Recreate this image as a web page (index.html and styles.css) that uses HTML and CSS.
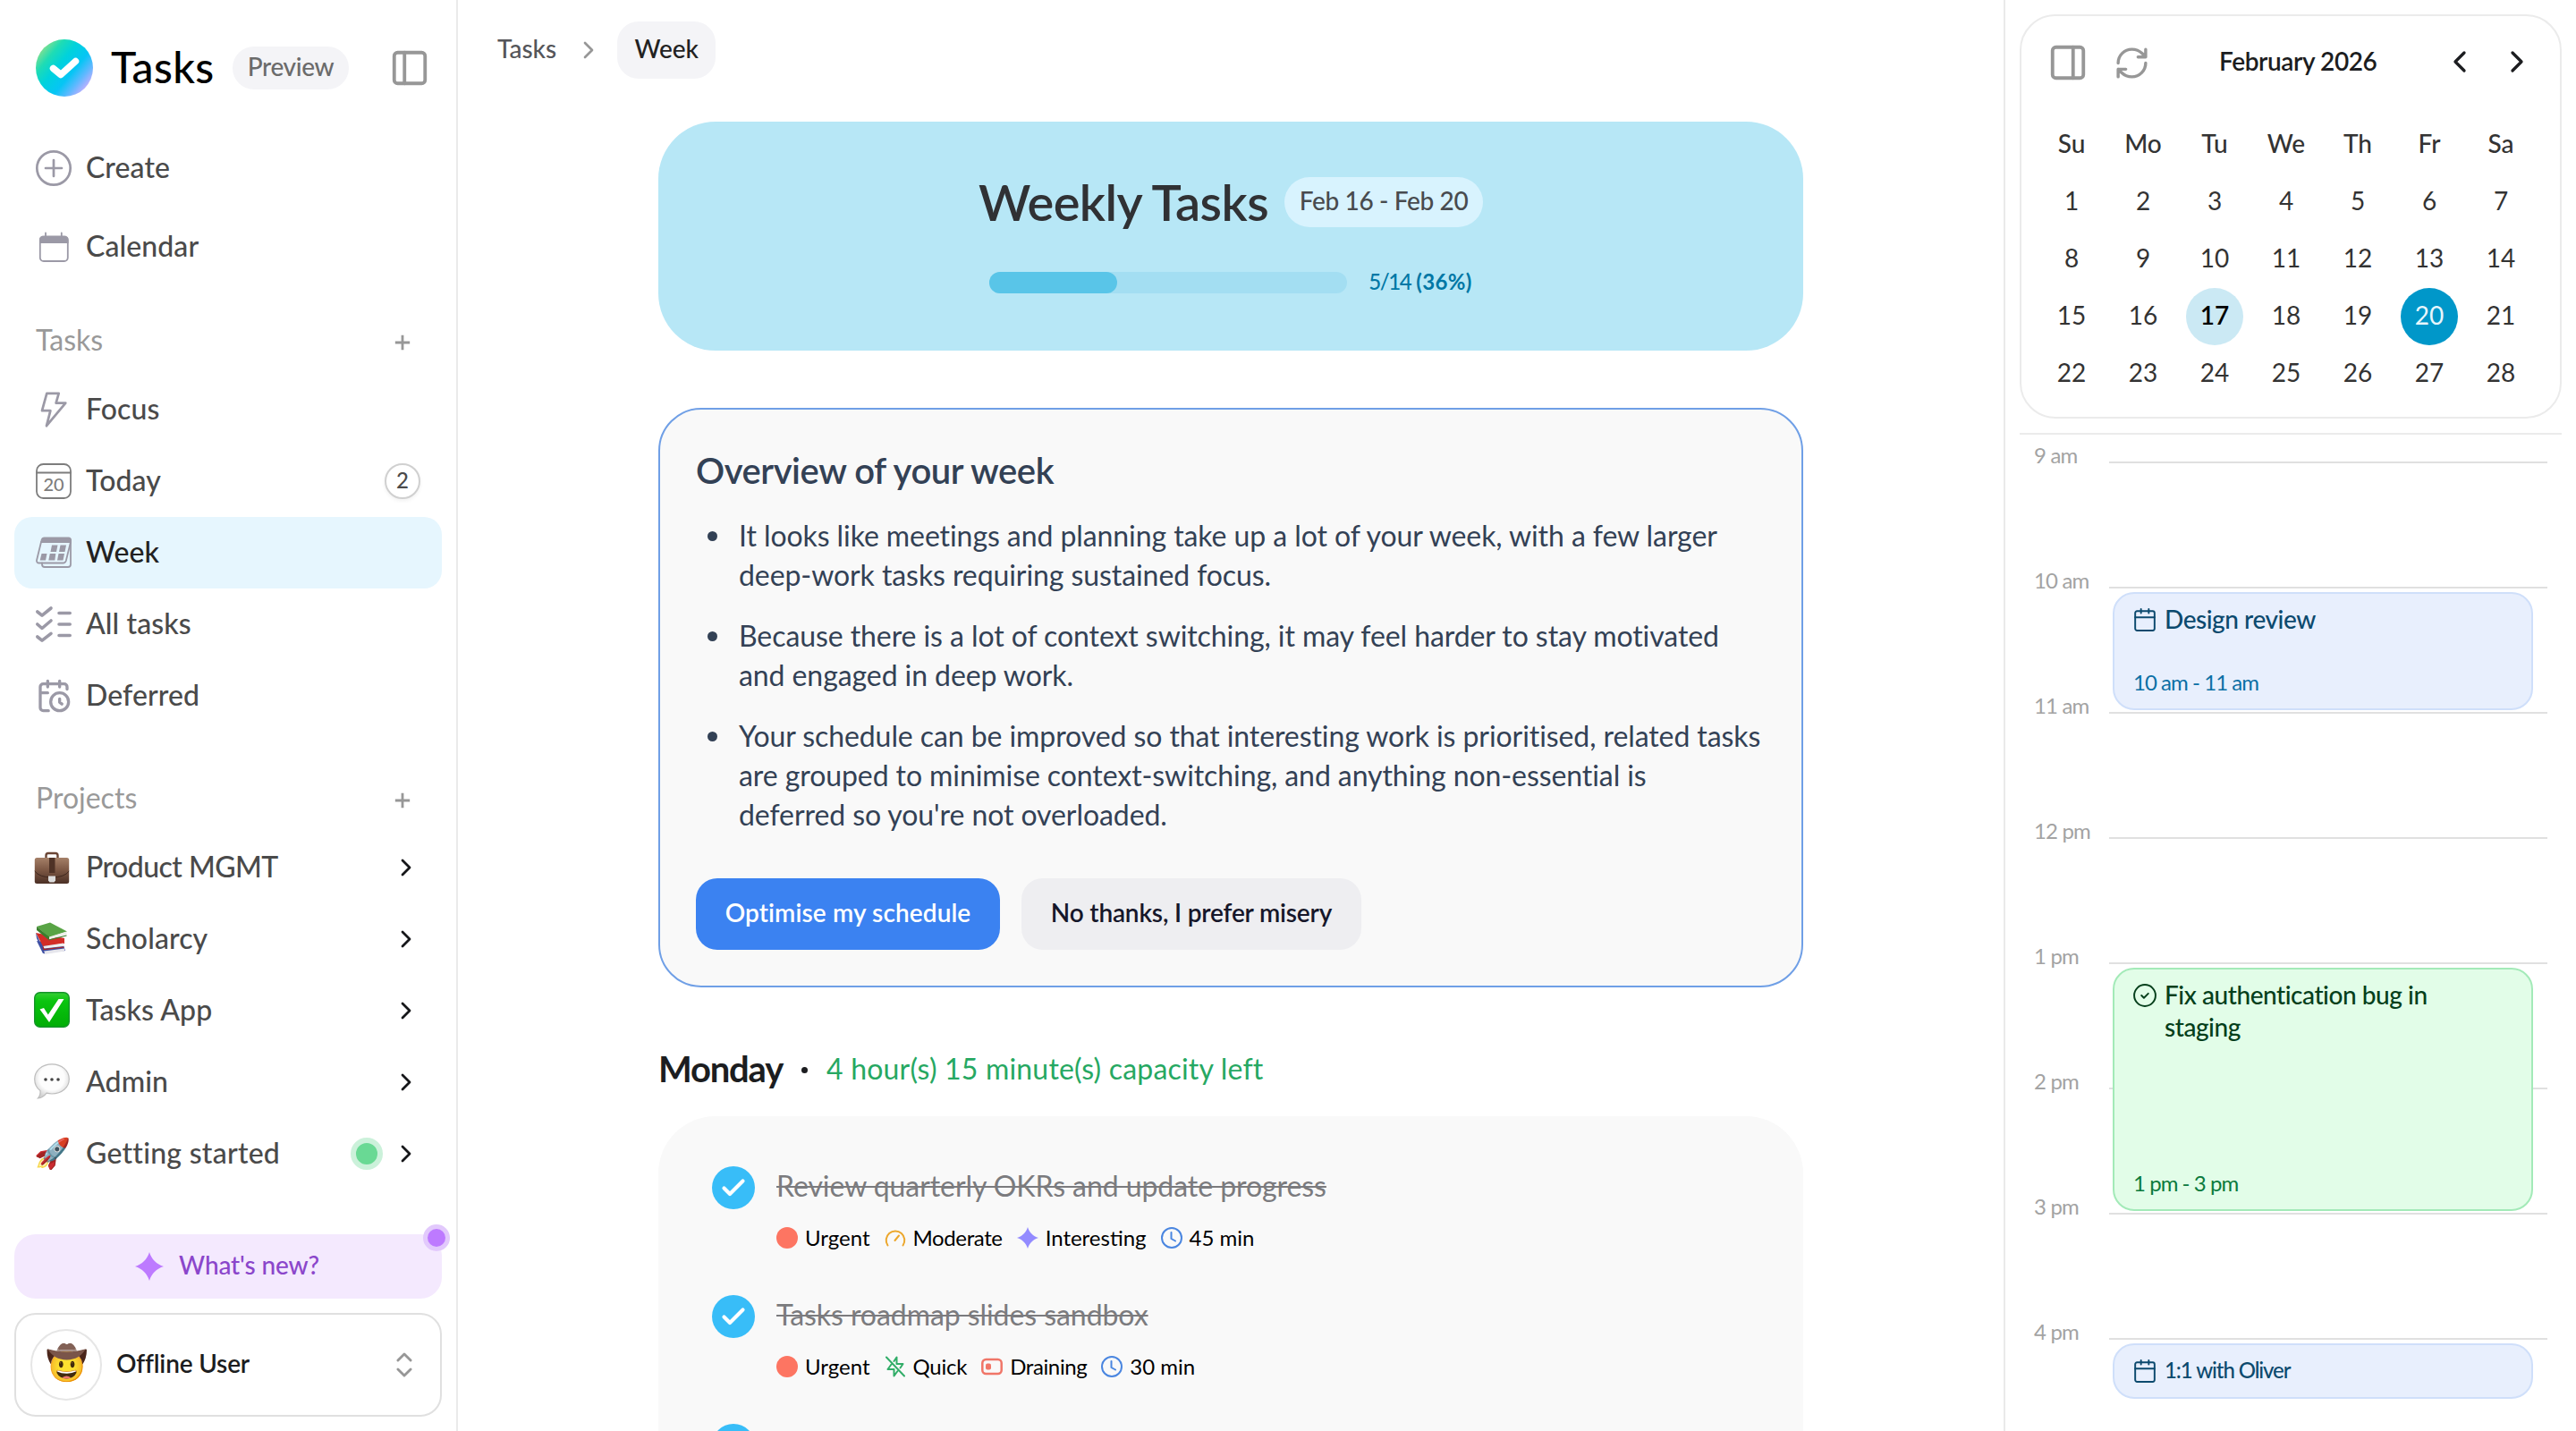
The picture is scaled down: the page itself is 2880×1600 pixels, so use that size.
FILE: index.html
```html
<!DOCTYPE html>
<html lang="en">
<head>
    <meta charset="UTF-8">
    <meta name="viewport" content="width=device-width, initial-scale=1.0">
    <title>Tasks - Week</title>
    <link rel="stylesheet" href="styles.css">
</head>
<body>
    <!-- Shared icons -->
    <svg class="sprite" xmlns="http://www.w3.org/2000/svg">
        <defs>
            <linearGradient id="leather" x1="0" y1="0" x2="0" y2="1">
                <stop offset="0" stop-color="#a58068"/>
                <stop offset="0.5" stop-color="#7a5542"/>
                <stop offset="1" stop-color="#4b3026"/>
            </linearGradient>
            <linearGradient id="green-tile" x1="0" y1="0" x2="0" y2="1">
                <stop offset="0" stop-color="#35cf35"/>
                <stop offset="0.25" stop-color="#0ac40f"/>
                <stop offset="1" stop-color="#00ad05"/>
            </linearGradient>
            <radialGradient id="bubble-fill" cx="0.5" cy="0.4" r="0.6">
                <stop offset="0.6" stop-color="#fdfdfd"/>
                <stop offset="1" stop-color="#d2d2d2"/>
            </radialGradient>
        </defs>
        <symbol id="chevron-right" viewBox="0 0 24 24"><path d="m9 18 6-6-6-6"/></symbol>
        <symbol id="chevron-left" viewBox="0 0 24 24"><path d="m15 18-6-6 6-6"/></symbol>
        <symbol id="plus" viewBox="0 0 24 24"><path d="M5 12h14M12 5v14"/></symbol>
        <symbol id="calendar" viewBox="0 0 24 24"><rect x="2" y="3" width="20" height="20" rx="2"/><path d="M8 1v4M16 1v4M2 9.500h20"/></symbol>
        <symbol id="clock" viewBox="0 0 24 24"><circle cx="12" cy="12" r="11"/><path d="M11.500 6v7l4.500 2.500"/></symbol>
        <symbol id="sparkle" viewBox="0 0 32 32"><path d="M16 0C18.500 8 24 13.500 32 16C24 18.500 18.500 24 16 32C13.500 24 8 18.500 0 16C8 13.500 13.500 8 16 0Z"/></symbol>
        <symbol id="check" viewBox="0 0 48 48"><circle cx="24" cy="24" r="24" fill="#38bdf8"/><path d="M13.500 24.500 20 31 34.500 16.500" fill="none" stroke="#fff" stroke-width="4.200" stroke-linecap="round" stroke-linejoin="round"/></symbol>
    </svg>

    <aside class="sidebar">
        <div class="brand">
            <svg class="logo" viewBox="0 0 64 64">
                <defs>
                    <linearGradient id="logo-fill" x1="0.08" y1="0.15" x2="0.92" y2="0.85">
                        <stop offset="0" stop-color="#8fe08c"/>
                        <stop offset="0.2" stop-color="#1fdcb4"/>
                        <stop offset="0.4" stop-color="#00d2dc"/>
                        <stop offset="0.64" stop-color="#06c5f5"/>
                        <stop offset="0.82" stop-color="#62b8ff"/>
                        <stop offset="0.96" stop-color="#b9b0ff"/>
                    </linearGradient>
                </defs>
                <circle cx="32" cy="32" r="32" fill="url(#logo-fill)"/>
                <path d="M19.500 32.500 28 39.500 44.500 24.500" fill="none" stroke="#fff" stroke-width="7.500" stroke-linecap="round" stroke-linejoin="round"/>
            </svg>
            <span class="brand-name">Tasks</span>
            <span class="preview">Preview</span>
            <svg class="line-icon panel-icon" viewBox="0 0 24 24"><rect x="3" y="3" width="18" height="18" rx="2"/><path d="M9 3v18"/></svg>
        </div>

        <nav class="top-nav">
            <a class="nav-item">
                <svg class="nav-icon" viewBox="0 0 40 40"><circle cx="20" cy="20" r="18.700"/><path d="M11 20h18M20 11v18"/></svg>
                <span class="nav-label">Create</span>
            </a>
            <a class="nav-item">
                <svg class="nav-icon thin" viewBox="0 0 40 40"><rect x="4.800" y="8.500" width="31" height="27.500" rx="4"/><path d="M11 4.500V9M28.800 4.500V9"/><path class="solid" d="M4 16v-4a4 4 0 0 1 4-4h24.500a4 4 0 0 1 4 4v4z"/></svg>
                <span class="nav-label">Calendar</span>
            </a>
        </nav>

        <div class="nav-heading">
            <span class="heading-tasks">Tasks</span>
            <svg class="line-icon plus-icon"><use href="#plus"/></svg>
        </div>
        <nav class="nav-list">
            <a class="nav-item">
                <svg class="nav-icon" viewBox="0 0 40 40"><path d="M12.300 1.800H25.700L22.600 12.600H33.300L12 38.200 16.400 21.200H7z"/></svg>
                <span class="nav-label">Focus</span>
            </a>
            <a class="nav-item">
                <svg class="nav-icon today-icon" viewBox="0 0 40 40"><rect x="1" y="1" width="38" height="38" rx="7.500"/><path d="M1 10.500h38"/><text x="20" y="31">20</text></svg>
                <span class="nav-label">Today</span>
                <span class="count">2</span>
            </a>
            <a class="nav-item active">
                <svg class="nav-icon thin" viewBox="0 0 40 40">
                    <path d="M7 31.500v1.500a3 3 0 0 0 3 3h26a3 3 0 0 0 3-3V6"/>
                    <path d="M6 8 1 28.500a2.500 2.500 0 0 0 2.500 3H30.500a3.500 3.500 0 0 0 3.300-2.500L39 8"/>
                    <path class="solid" d="M5 9 5.800 5.500A4 4 0 0 1 9.500 2.500H36.500a3.500 3.500 0 0 1 3.500 3.500V9z"/>
                    <path class="solid" d="M18 11.500h6.500l-1.500 7.500H16.500zM27.500 11.500H34l-1.500 7.500H26zM6.500 21H12.500L11 28.500H4.700zM15.800 21h6.500l-1 7.500H14.300zM25.500 21H32l-1.500 7.500H24z"/>
                </svg>
                <span class="nav-label">Week</span>
            </a>
            <a class="nav-item">
                <svg class="nav-icon thick" viewBox="0 0 40 40"><path d="M1.800 6 7 10.200 17 2M1.800 20 7 24.500 17 16M1.800 34 7 38.200 17 30.300M26 7.500h12.200M26 20h12.200M26 32.500h12.200"/></svg>
                <span class="nav-label">All tasks</span>
            </a>
            <a class="nav-item">
                <svg class="nav-icon lucide" viewBox="0 0 24 24"><path d="M21 7.500V6a2 2 0 0 0-2-2H5a2 2 0 0 0-2 2v14a2 2 0 0 0 2 2h3.500M16 2v4M8 2v4M3 10h5M17.500 17.500 16 16.300V14"/><circle cx="16" cy="16" r="6"/></svg>
                <span class="nav-label">Deferred</span>
            </a>
        </nav>

        <div class="nav-heading projects-heading">
            <span>Projects</span>
            <svg class="line-icon plus-icon"><use href="#plus"/></svg>
        </div>
        <nav class="nav-list">
            <a class="nav-item">
                <svg class="project-icon" viewBox="0 0 40 40">
                    <path d="M13.500 11V7.500a2.500 2.500 0 0 1 2.500-2.500h8a2.500 2.500 0 0 1 2.500 2.500V11" fill="none" stroke="#6b4636" stroke-width="2.400"/>
                    <rect x="0.800" y="10" width="38.400" height="29" rx="2.500" fill="url(#leather)"/>
                    <path d="M0.800 25Q6 32 20 32T39.200 25" fill="none" stroke="#3e271e" stroke-width="1"/>
                    <rect x="17" y="10" width="6.500" height="17" fill="#4e3226"/>
                    <path d="M16 30.500h8v5l-1.500 2h-5l-1.500-2z" fill="#dcdcdc"/>
                </svg>
                <span class="nav-label mgmt">Product MGMT</span>
                <svg class="chevron"><use href="#chevron-right"/></svg>
            </a>
            <a class="nav-item">
                <svg class="project-icon" viewBox="0 0 40 40">
                    <path d="M3 23 10 37 35 34 33 28z" fill="#3f4fa3"/>
                    <path d="M11 34.500 34 31.500 34.500 34.500 12.500 38z" fill="#e6e6ec"/>
                    <path d="M2 14 10 29 34 26V20z" fill="#d32d27"/>
                    <path d="M2 14 3 20 10 35.500 12 38 10 31z" fill="#3f4fa3"/>
                    <path d="M10 29 33 25.500V29L11.500 31.500z" fill="#eee"/>
                    <path d="M10 29.500 11 32.500 33.500 30" fill="none" stroke="#b02420" stroke-width="1.200"/>
                    <path d="M3 7 18 2.500 37 12.500 17 19z" fill="#58a445"/>
                    <path d="M3 7V11L16.500 22 17 18.500z" fill="#3a7f2d"/>
                    <path d="M17 18.500 36.500 12.500V16L17 21.500z" fill="#eef0ea"/>
                    <path d="M16.500 22 36.500 17" fill="none" stroke="#3a7f2d" stroke-width="1.200"/>
                </svg>
                <span class="nav-label">Scholarcy</span>
                <svg class="chevron"><use href="#chevron-right"/></svg>
            </a>
            <a class="nav-item">
                <svg class="project-icon" viewBox="0 0 40 40">
                    <rect x="0.700" y="0.700" width="38.600" height="38.600" rx="6" fill="url(#green-tile)" stroke="#15942a" stroke-width="1.400"/>
                    <path d="M6.500 19.500 11 18 15.800 25.500 27.500 8H33.500L17 34z" fill="#fff"/>
                </svg>
                <span class="nav-label">Tasks App</span>
                <svg class="chevron"><use href="#chevron-right"/></svg>
            </a>
            <a class="nav-item">
                <svg class="project-icon" viewBox="0 0 40 40">
                    <path d="M20 0.800C31 0.800 39.300 8 39.300 17.500S31 34 20 34Q17 34 14 33.200Q10 38.500 4.500 39Q7.500 35.500 7 30.500C3 27.500 0.700 23 0.700 17.500 0.700 8 9 0.800 20 0.800Z" fill="url(#bubble-fill)" stroke="#bdbdbd" stroke-width="1.200"/>
                    <circle cx="13" cy="18" r="1.800" fill="#444"/><circle cx="20" cy="18" r="1.800" fill="#444"/><circle cx="27" cy="18" r="1.800" fill="#444"/>
                </svg>
                <span class="nav-label">Admin</span>
                <svg class="chevron"><use href="#chevron-right"/></svg>
            </a>
            <a class="nav-item">
                <span class="emoji">🚀</span>
                <span class="nav-label started">Getting started</span>
                <span class="status-dot"></span>
                <svg class="chevron"><use href="#chevron-right"/></svg>
            </a>
        </nav>

        <div class="whats-new">
            <svg class="sparkle"><use href="#sparkle"/></svg>
            <span>What's new?</span>
            <span class="new-dot"></span>
        </div>

        <div class="user-card">
            <span class="avatar">🤠</span>
            <span class="user-name">Offline User</span>
            <svg class="line-icon sort-icon" viewBox="0 0 24 24"><path d="m7 15.500 5 5 5-5M7 8.500l5-5 5 5"/></svg>
        </div>
    </aside>

    <main class="main">
        <div class="breadcrumb">
            <span>Tasks</span>
            <svg class="line-icon crumb-arrow"><use href="#chevron-right"/></svg>
            <span class="current">Week</span>
        </div>

        <div class="content">
            <section class="banner">
                <div class="banner-title">
                    <h1>Weekly Tasks</h1>
                    <span class="date-range">Feb 16 - Feb 20</span>
                </div>
                <div class="progress-row">
                    <div class="progress"><div class="progress-fill" style="width: 35.7%"></div></div>
                    <span class="progress-text"><span class="ratio">5/14</span> <b>(36%)</b></span>
                </div>
            </section>

            <section class="overview">
                <h2>Overview of your week</h2>
                <ul>
                    <li>It looks like meetings and planning take up a lot of your week, with a few larger<br>deep-work tasks requiring sustained focus.</li>
                    <li>Because there is a lot of context switching, it may feel harder to stay motivated<br>and engaged in deep work.</li>
                    <li>Your schedule can be improved so that interesting work is prioritised, related tasks<br>are grouped to minimise context-switching, and anything non-essential is<br>deferred so you're not overloaded.</li>
                </ul>
                <div class="actions">
                    <button class="primary">Optimise my schedule</button>
                    <button class="secondary">No thanks, I prefer misery</button>
                </div>
            </section>

            <div class="day-heading">
                <h3>Monday</h3>
                <span class="separator"></span>
                <span class="capacity">4 hour(s) 15 minute(s) capacity left</span>
            </div>
            <section class="task-list">
                <div class="task">
                    <svg class="task-check"><use href="#check"/></svg>
                    <div>
                        <div class="task-title">Review quarterly OKRs and update progress</div>
                        <div class="tags">
                            <span class="tag"><i class="urgent-dot"></i>Urgent</span>
                            <span class="tag moderate"><svg class="tag-icon gauge" viewBox="0 0 24 24"><path d="M3.500 20.500A10.300 10.300 0 1 1 20.500 20.500M11.500 15 16 9.500"/></svg>Moderate</span>
                            <span class="tag"><svg class="tag-icon interesting"><use href="#sparkle"/></svg>Interesting</span>
                            <span class="tag"><svg class="tag-icon time"><use href="#clock"/></svg>45 min</span>
                        </div>
                    </div>
                </div>
                <div class="task">
                    <svg class="task-check"><use href="#check"/></svg>
                    <div>
                        <div class="task-title">Tasks roadmap slides sandbox</div>
                        <div class="tags">
                            <span class="tag"><i class="urgent-dot"></i>Urgent</span>
                            <span class="tag quick-tag"><svg class="tag-icon quick" viewBox="0 0 24 24"><path d="M2 1.500 22 22.500M10.500 6 13.500 1.500V9H20.500L17.500 13.500M7.500 9.500 3.500 15H10.500V22.500L14.500 17"/></svg>Quick</span>
                            <span class="tag draining-tag"><svg class="tag-icon draining" viewBox="0 0 24 24"><rect x="1.300" y="4" width="21.400" height="16" rx="4"/><rect class="level" x="5" y="8.500" width="6" height="7" rx="2"/></svg>Draining</span>
                            <span class="tag"><svg class="tag-icon time"><use href="#clock"/></svg>30 min</span>
                        </div>
                    </div>
                </div>
                <div class="task">
                    <svg class="task-check"><use href="#check"/></svg>
                </div>
            </section>
        </div>
    </main>

    <aside class="schedule">
        <section class="month">
            <div class="month-header">
                <svg class="line-icon panel-icon" viewBox="0 0 24 24"><rect x="3" y="3" width="18" height="18" rx="2"/><path d="M15 3v18"/></svg>
                <svg class="line-icon refresh-icon" viewBox="0 0 24 24"><path d="M3 12a9 9 0 0 1 9-9 9.750 9.750 0 0 1 6.740 2.740L21 8M21 3v5h-5M21 12a9 9 0 0 1-9 9 9.750 9.750 0 0 1-6.740-2.740L3 16M8 16H3v5"/></svg>
                <span class="month-name">February 2026</span>
                <svg class="month-arrow"><use href="#chevron-left"/></svg>
                <svg class="month-arrow next"><use href="#chevron-right"/></svg>
            </div>
            <div class="days">
                <b>Su</b><b>Mo</b><b>Tu</b><b>We</b><b>Th</b><b>Fr</b><b>Sa</b>
                <span>1</span><span>2</span><span>3</span><span>4</span><span>5</span><span>6</span><span>7</span>
                <span>8</span><span>9</span><span>10</span><span>11</span><span>12</span><span>13</span><span>14</span>
                <span>15</span><span>16</span><span class="marked">17</span><span>18</span><span>19</span><span class="today">20</span><span>21</span>
                <span>22</span><span>23</span><span>24</span><span>25</span><span>26</span><span>27</span><span>28</span>
            </div>
        </section>

        <section class="timeline">
            <div class="hours">
                <div class="hour"><span>9 am</span><div class="slot"></div></div>
                <div class="hour"><span>10 am</span><div class="slot"></div></div>
                <div class="hour"><span>11 am</span><div class="slot"></div></div>
                <div class="hour"><span>12 pm</span><div class="slot"></div></div>
                <div class="hour"><span>1 pm</span><div class="slot"></div></div>
                <div class="hour"><span>2 pm</span><div class="slot"></div></div>
                <div class="hour"><span>3 pm</span><div class="slot"></div></div>
                <div class="hour last"><span>4 pm</span><div class="slot"></div></div>

                <div class="event design">
                    <div class="event-title"><svg class="event-icon"><use href="#calendar"/></svg>Design review</div>
                    <div class="event-time">10 am - 11 am</div>
                </div>
                <div class="event bugfix">
                    <div class="event-title"><svg class="event-icon" viewBox="0 0 24 24"><circle cx="12" cy="12" r="11"/><path d="m8.500 12 2.500 2.500 4.500-4.500"/></svg><span>Fix authentication bug in<br>staging</span></div>
                    <div class="event-time">1 pm - 3 pm</div>
                </div>
                <div class="event oliver">
                    <div class="event-title"><svg class="event-icon"><use href="#calendar"/></svg>1:1 with Oliver</div>
                </div>
            </div>
        </section>
    </aside>
</body>
</html>
```

FILE: styles.css
```css
* {
    box-sizing: border-box;
}

body {
    font-family: 'Lato', sans-serif;
    font-size: 32px;
    margin: 0;
    height: 1600px;
    display: flex;
    overflow: hidden;
    background: #fff;
    color: #1c1d20;
}

svg {
    flex-shrink: 0;
    overflow: visible;
}

.sprite {
    position: absolute;
    width: 0;
    height: 0;
}

.line-icon {
    fill: none;
    stroke: #979797;
    stroke-width: 2;
    stroke-linecap: round;
    stroke-linejoin: round;
}

.panel-icon {
    width: 46px;
    height: 46px;
}

/* Sidebar */
.sidebar {
    width: 512px;
    padding: 16px;
    border-right: 2px solid #eaeaea;
    display: flex;
    flex-direction: column;
}

.brand {
    height: 128px;
    padding: 0 13px 8px 24px;
    display: flex;
    align-items: center;
}

.logo {
    width: 64px;
    height: 64px;
}

.brand-name {
    width: 117px;
    margin: 0 19px 4px 20px;
    font-size: 48px;
    font-weight: 500;
    letter-spacing: 0.009em;
    color: #000;
}

.preview {
    width: 130px;
    height: 48px;
    line-height: 44px;
    border-radius: 24px;
    background: #f4f4f7;
    color: #6b6b6b;
    font-size: 28px;
    font-weight: 500;
    letter-spacing: -0.012em;
    text-align: center;
}

.brand .panel-icon {
    margin-left: auto;
}

.nav-item {
    height: 80px;
    padding: 0 24px;
    border-radius: 20px;
    display: flex;
    align-items: center;
    color: #4a4a4a;
}

.top-nav .nav-item {
    height: 88px;
}

.nav-item.active {
    background: #e6f6fe;
    color: #222;
}

.nav-icon {
    width: 40px;
    height: 40px;
    fill: none;
    stroke: #9b99a6;
    stroke-width: 2.7;
    stroke-linecap: round;
    stroke-linejoin: round;
}

.nav-icon.thin {
    stroke-width: 1.8;
}

.nav-icon.thick {
    stroke-width: 3.6;
}

.nav-icon.lucide {
    stroke-width: 2;
}

.nav-icon .solid {
    fill: #9b99a6;
    stroke: none;
}

.today-icon {
    stroke: #7d7d7d;
    stroke-width: 1.8;
}

.today-icon text {
    fill: #7d7d7d;
    stroke: none;
    font-size: 20px;
    font-weight: 500;
    text-anchor: middle;
}

.nav-label {
    margin-left: 16px;
    padding-bottom: 4px;
    font-weight: 500;
    letter-spacing: 0.003em;
    white-space: nowrap;
}

.mgmt {
    letter-spacing: -0.017em;
}

.started {
    letter-spacing: 0.008em;
}

.count {
    width: 40px;
    height: 40px;
    margin-left: auto;
    line-height: 33px;
    border: 2px solid #d0d0d0;
    border-radius: 50%;
    box-shadow: 0 2px 4px rgba(0, 0, 0, 0.06);
    background: #fff;
    font-size: 24px;
    font-weight: 500;
    text-align: center;
}

.nav-heading {
    height: 74px;
    margin-top: 24px;
    padding: 0 30px 3px 24px;
    display: flex;
    align-items: center;
    justify-content: space-between;
    color: #999;
}

.projects-heading {
    margin-top: 38px;
}

.plus-icon {
    width: 28px;
    height: 28px;
    stroke-width: 2.4;
    stroke-linecap: butt;
    margin: 6px 0 0;
}

.project-icon {
    width: 40px;
    height: 40px;
    margin: 0 2px 2px -2px;
}

.emoji {
    width: 40px;
    margin-left: -2px;
    margin-right: 2px;
    padding-bottom: 4px;
    font-size: 33px;
    display: flex;
    justify-content: center;
}

.chevron {
    width: 32px;
    height: 32px;
    margin-left: auto;
    fill: none;
    stroke: #16171a;
    stroke-width: 2.1;
    stroke-linecap: round;
    stroke-linejoin: round;
}

.status-dot {
    width: 36px;
    height: 36px;
    margin-left: auto;
    margin-right: 10px;
    border: 6px solid #cbf1da;
    border-radius: 50%;
    background: #69d994;
}

.status-dot + .chevron {
    margin-left: 0;
}

.whats-new {
    position: relative;
    height: 72px;
    margin-top: 50px;
    padding-right: 2px;
    border-radius: 24px;
    background: #f4e9fe;
    color: #8b46cb;
    font-size: 28px;
    font-weight: 500;
    letter-spacing: -0.005em;
    display: flex;
    align-items: center;
    justify-content: center;
    gap: 17px;
}

.whats-new span {
    margin-bottom: 5px;
}

.sparkle {
    width: 32px;
    height: 32px;
    fill: #bd7aff;
}

.whats-new .new-dot {
    position: absolute;
    top: -11px;
    right: -9px;
    width: 30px;
    height: 30px;
    margin: 0;
    border: 5px solid #e2c9fc;
    border-radius: 50%;
    background: #bd7aff;
}

.user-card {
    height: 116px;
    margin-top: 16px;
    padding: 0 23px 0 16px;
    border: 2px solid #e0e0e0;
    border-radius: 24px;
    display: flex;
    align-items: center;
}

.avatar {
    width: 80px;
    height: 80px;
    border: 2px solid #e6e6e6;
    border-radius: 50%;
    font-size: 38px;
    padding-bottom: 7px;
    display: flex;
    align-items: center;
    justify-content: center;
}

.user-name {
    margin: 0 0 4px 16px;
    font-size: 28px;
    font-weight: 600;
    letter-spacing: -0.006em;
}

.sort-icon {
    width: 34px;
    height: 34px;
    margin-left: auto;
}

/* Main column */
.main {
    width: 1728px;
    overflow: hidden;
}

.breadcrumb {
    height: 112px;
    padding-left: 44px;
    display: flex;
    align-items: center;
    font-size: 28px;
    font-weight: 500;
    color: #55565a;
}

.breadcrumb span {
    padding-bottom: 4px;
}

.crumb-arrow {
    width: 32px;
    height: 32px;
    margin: 0 16px 0 20px;
}

.breadcrumb .current {
    width: 110px;
    height: 64px;
    padding: 0;
    line-height: 60px;
    border-radius: 24px;
    background: #f4f4f7;
    color: #222;
    text-align: center;
}

.content {
    width: 1280px;
    margin: 24px auto 0;
}

.banner {
    height: 256px;
    padding-top: 50px;
    border-radius: 64px;
    background: #b7e7f6;
    display: flex;
    flex-direction: column;
    align-items: center;
    gap: 30px;
}

.banner-title {
    height: 80px;
    display: flex;
    align-items: center;
    gap: 18px;
}

.banner-title h1 {
    margin: 0 0 2px;
    font-size: 56px;
    font-weight: 600;
    letter-spacing: -0.01em;
    color: #303134;
}

.date-range {
    width: 222px;
    height: 56px;
    line-height: 52px;
    border-radius: 28px;
    background: #d8f3fe;
    font-size: 28px;
    font-weight: 500;
    letter-spacing: -0.013em;
    text-align: center;
    color: #484b4e;
}

.progress-row {
    height: 40px;
    display: flex;
    align-items: center;
    gap: 24px;
}

.progress {
    width: 400px;
    height: 24px;
    border-radius: 12px;
    background: #a3def2;
}

.progress-fill {
    height: 24px;
    border-radius: 12px;
    background: #59c5e8;
}

.progress-text {
    padding-bottom: 4px;
    font-size: 24px;
    font-weight: 500;
    color: #0077a5;
}

.progress-text b {
    letter-spacing: 0.015em;
}

.ratio {
    letter-spacing: -0.06em;
}

.overview {
    height: 648px;
    margin-top: 64px;
    padding: 40px;
    border: 2px solid #6f9fe6;
    border-radius: 48px;
    background: #f9f9f9;
    color: #334155;
}

.overview h2 {
    margin: 0;
    line-height: 56px;
    font-size: 40px;
    font-weight: 600;
    letter-spacing: -0.011em;
}

.overview ul {
    margin: 23px 0 0;
    padding-left: 48px;
    list-style: none;
}

.overview li {
    position: relative;
    margin-bottom: 24px;
    line-height: 44px;
    letter-spacing: -0.0025em;
    white-space: nowrap;
}

.overview li::before {
    content: '';
    position: absolute;
    left: -35px;
    top: 17px;
    width: 11px;
    height: 11px;
    border-radius: 50%;
    background: #334155;
}

.actions {
    margin-top: 49px;
    display: flex;
    gap: 24px;
}

button {
    height: 80px;
    padding: 0 0 5px;
    border: none;
    border-radius: 24px;
    font-family: inherit;
    font-size: 28px;
    font-weight: 600;
}

.primary {
    width: 340px;
    background: #3b82f1;
    color: #fff;
    letter-spacing: 0.004em;
}

.secondary {
    width: 380px;
    background: #eeeef1;
    color: #16172a;
    letter-spacing: -0.006em;
}

.day-heading {
    height: 144px;
    padding-top: 42px;
    display: flex;
    align-items: center;
    padding-bottom: 4px;
}

.day-heading h3 {
    margin: -1px 0 0;
    font-size: 40px;
    font-weight: 700;
    letter-spacing: -0.03em;
}

.separator {
    width: 7px;
    height: 7px;
    margin: 2px 21px 0 21px;
    border-radius: 50%;
    background: #1c1d20;
}

.capacity {
    padding-bottom: 2px;
    color: #26a862;
    letter-spacing: 0.006em;
}

.task-list {
    height: 500px;
    padding: 52px 56px;
    border-radius: 64px;
    background: #f9f9f9;
}

.task {
    height: 144px;
    padding-left: 4px;
    display: flex;
    gap: 24px;
}

.task-check {
    width: 48px;
    height: 48px;
    margin-top: 4px;
}

.task-title {
    height: 54px;
    line-height: 52px;
    color: #7b7b7e;
    letter-spacing: -0.002em;
    text-decoration: line-through;
    text-decoration-thickness: 2px;
}

.tags {
    height: 60px;
    display: flex;
    align-items: center;
    gap: 16px;
}

.tag {
    display: flex;
    align-items: center;
    gap: 8px;
    height: 30px;
    line-height: 26px;
    font-size: 24px;
    color: #000;
}

.moderate {
    letter-spacing: -0.016em;
}

.quick-tag {
    letter-spacing: -0.01em;
}

.draining-tag {
    letter-spacing: -0.016em;
}

.urgent-dot {
    width: 24px;
    height: 24px;
    border-radius: 50%;
    background: #fd7562;
}

.tag-icon {
    width: 24px;
    height: 24px;
    fill: none;
    stroke-width: 2;
    stroke-linecap: round;
    stroke-linejoin: round;
}

.gauge {
    stroke: #eca72c;
}

.interesting {
    fill: #938bff;
}

.time {
    stroke: #4a86e0;
}

.quick {
    stroke: #31ad68;
}

.draining {
    stroke: #f07668;
    stroke-width: 2.5;
}

.draining .level {
    fill: #f07668;
    stroke: none;
}

/* Calendar column */
.schedule {
    width: 640px;
    padding: 16px 16px 0;
    border-left: 2px solid #eaeaea;
    display: flex;
    flex-direction: column;
}

.month {
    height: 452px;
    padding: 22px 24px;
    border: 2px solid #ebebeb;
    border-radius: 40px;
}

.month-header {
    height: 60px;
    padding-left: 5px;
    display: flex;
    align-items: center;
}

.refresh-icon {
    width: 41px;
    height: 41px;
    margin-left: 28px;
}

.month-name {
    width: 180px;
    margin: 0 69px 4px 77px;
    font-size: 28px;
    font-weight: 600;
    letter-spacing: -0.014em;
    white-space: nowrap;
}

.month-arrow {
    width: 40px;
    height: 40px;
    margin-bottom: 2px;
    fill: none;
    stroke: #1c1d20;
    stroke-width: 2;
    stroke-linecap: round;
    stroke-linejoin: round;
}

.month-arrow.next {
    margin-left: 24px;
}

.days {
    display: grid;
    grid-template-columns: repeat(7, 64px);
    gap: 0 16px;
    margin-top: 30px;
    font-size: 28px;
    line-height: 61px;
    text-align: center;
    color: #333;
}

.days b {
    height: 64px;
    font-weight: 500;
}

.days span {
    height: 64px;
    border-radius: 50%;
}

.days .marked {
    background: #cbe9f4;
    color: #000;
    font-weight: 600;
}

.days .today {
    background: #0097c9;
    color: #e8f6fc;
}

.timeline {
    margin-top: 16px;
    padding-top: 16px;
    border-top: 2px solid #ebebeb;
}

.hours {
    position: relative;
    height: 1098px;
    padding-top: 14px;
}

.hour {
    height: 140px;
    padding: 0 16px;
    display: flex;
    align-items: flex-start;
}

.hour.last {
    height: 104px;
}

.hour span {
    width: 84px;
    margin-top: -23px;
    line-height: 32px;
    font-size: 24px;
    letter-spacing: -0.035em;
    color: #a3a3a3;
}

.slot {
    flex: 1;
    border-top: 2px solid #e0e0e0;
}

.event {
    position: absolute;
    left: 104px;
    right: 32px;
    padding: 10px 21px;
    border: 2px solid #cfdffa;
    border-radius: 24px;
    background: #e8effd;
    color: #0c4a6e;
    font-size: 28px;
    font-weight: 500;
    display: flex;
    flex-direction: column;
    justify-content: space-between;
}

.design {
    top: 160px;
    height: 132px;
}

.bugfix {
    top: 580px;
    height: 272px;
    border-color: #a3eab8;
    background: #e2fde8;
    color: #053f1b;
}

.oliver {
    top: 1000px;
    height: 62px;
}

.event-title {
    display: flex;
    gap: 9px;
    line-height: 36px;
    letter-spacing: -0.016em;
}

.event-icon {
    width: 26px;
    height: 26px;
    margin-top: 6px;
    fill: none;
    stroke: currentColor;
    stroke-width: 1.8;
    stroke-linecap: round;
    stroke-linejoin: round;
}

.event-time {
    margin-bottom: 1px;
    line-height: 36px;
    font-size: 24px;
    font-weight: 400;
    letter-spacing: -0.04em;
    color: #0b6fa5;
}

.bugfix .event-time {
    color: #0b7a3c;
}

.oliver .event-title {
    font-size: 24px;
    letter-spacing: -0.045em;
}
```
